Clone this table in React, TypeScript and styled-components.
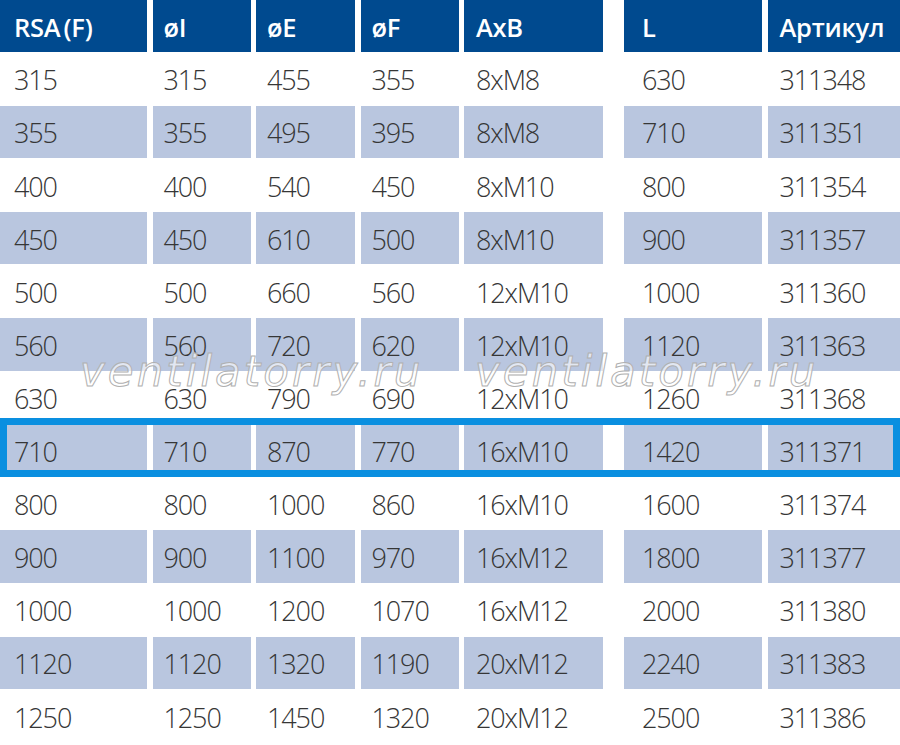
import React from "react";
import styled, { createGlobalStyle } from "styled-components";

const Global = createGlobalStyle`
  html, body { margin: 0; padding: 0; background: #ffffff; }
  body { width: 900px; height: 745px; overflow: hidden; }
`;

const Table = styled.div`
  position: relative;
  width: 900px;
  display: flex;
  flex-direction: column;
  font-family: "Open Sans", "Noto Sans", sans-serif;
`;

const COLS = "147px 98px 99px 98px 139px 10px 138px 1fr";

const HeaderRow = styled.div`
  display: grid;
  grid-template-columns: ${COLS};
  column-gap: 5.5px;
  height: 51.7px;
  margin-bottom: 0.9px;
`;

const HeadCell = styled.div<{ $pad: number; $skip?: boolean }>`
  background: #004a8f;
  color: #ffffff;
  font-weight: 600;
  font-size: 25.5px;
  letter-spacing: -0.3px;
  word-spacing: -3px;
  display: flex;
  align-items: center;
  padding: 3px 0 0 ${(p) => p.$pad}px;
  white-space: nowrap;
  ${(p) => (p.$skip ? "grid-column-start: 7;" : "")}
`;

const Row = styled.div`
  position: relative;
  display: grid;
  grid-template-columns: ${COLS};
  column-gap: 5.5px;
  height: 53.1px;
`;

const Cell = styled.div<{ $pad: number; $shade: boolean; $skip?: boolean }>`
  background: ${(p) => (p.$shade ? "#b9c6df" : "transparent")};
  color: #363636;
  font-weight: 300;
  font-size: 27px;
  letter-spacing: -1.1px;
  display: flex;
  align-items: center;
  padding: 2px 0 0 ${(p) => p.$pad}px;
  margin-bottom: 0.5px;
  white-space: nowrap;
  ${(p) => (p.$skip ? "grid-column-start: 7;" : "")}
`;

const Frame = styled.div`
  position: absolute;
  left: 0;
  right: 0;
  top: -6px;
  bottom: 0;
  border: 7px solid #0a8fe0;
  box-sizing: border-box;
  pointer-events: none;
`;

const Watermark = styled.span<{ $left: number }>`
  position: absolute;
  top: 351px;
  left: ${(p) => p.$left}px;
  font-family: "DejaVu Sans", Verdana, sans-serif;
  font-style: italic;
  font-size: 42px;
  line-height: 42px;
  letter-spacing: 3px;
  color: rgba(255, 255, 255, 0.6);
  -webkit-text-stroke: 1px #b0b0b0;
  white-space: nowrap;
  pointer-events: none;
`;

const headers = ["RSA (F)", "øI", "øE", "øF", "AxB", "L", "Артикул"];
const pads = [14, 11, 11, 11, 12, 18, 12];

const data: string[][] = [
  ["315", "315", "455", "355", "8xM8", "630", "311348"],
  ["355", "355", "495", "395", "8xM8", "710", "311351"],
  ["400", "400", "540", "450", "8xM10", "800", "311354"],
  ["450", "450", "610", "500", "8xM10", "900", "311357"],
  ["500", "500", "660", "560", "12xM10", "1000", "311360"],
  ["560", "560", "720", "620", "12xM10", "1120", "311363"],
  ["630", "630", "790", "690", "12xM10", "1260", "311368"],
  ["710", "710", "870", "770", "16xM10", "1420", "311371"],
  ["800", "800", "1000", "860", "16xM10", "1600", "311374"],
  ["900", "900", "1100", "970", "16xM12", "1800", "311377"],
  ["1000", "1000", "1200", "1070", "16xM12", "2000", "311380"],
  ["1120", "1120", "1320", "1190", "20xM12", "2240", "311383"],
  ["1250", "1250", "1450", "1320", "20xM12", "2500", "311386"],
];

export default function App() {
  return (
    <>
      <Global />
      <Table>
        <HeaderRow>
          {headers.map((h, i) => (
            <HeadCell key={h} $pad={pads[i]} $skip={i === 5}>
              {h}
            </HeadCell>
          ))}
        </HeaderRow>
        {data.map((row, r) => (
          <Row key={row[6]}>
            {row.map((v, i) => (
              <Cell key={i} $pad={pads[i]} $shade={r % 2 === 1} $skip={i === 5}>
                {v}
              </Cell>
            ))}
            {r === 7 && <Frame />}
          </Row>
        ))}
        <Watermark $left={80}>ventilatorry.ru</Watermark>
        <Watermark $left={475}>ventilatorry.ru</Watermark>
      </Table>
    </>
  );
}
